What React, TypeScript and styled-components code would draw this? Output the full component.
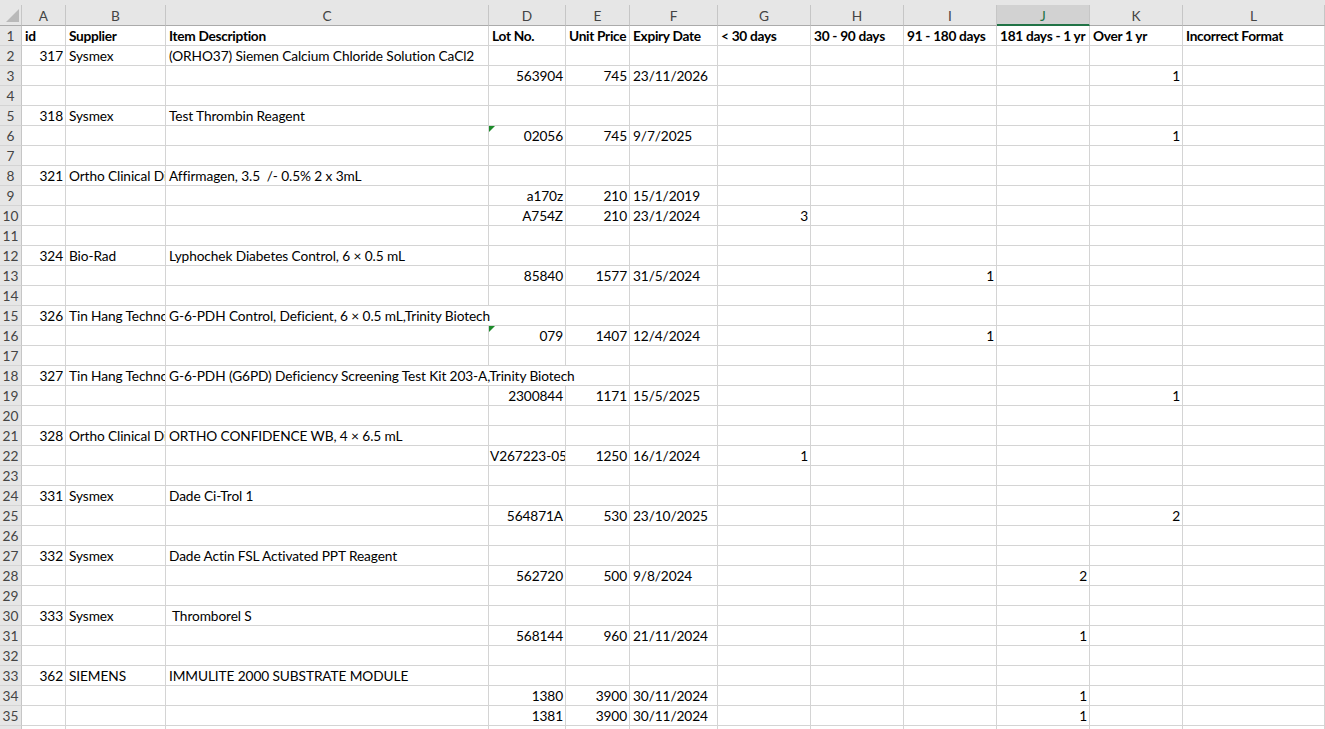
import styled, { createGlobalStyle } from "styled-components";

type Align = "l" | "r";

interface ICell {
  t: string;
  a?: Align;
  span?: number;
  flag?: boolean;
  bold?: boolean;
}

const COLS = ["A", "B", "C", "D", "E", "F", "G", "H", "I", "J", "K", "L"];
const SELECTED_COL = "J";

const header: Record<string, ICell> = {
  A: { t: "id", bold: true },
  B: { t: "Supplier", bold: true },
  C: { t: "Item Description", bold: true },
  D: { t: "Lot No.", bold: true },
  E: { t: "Unit Price", bold: true },
  F: { t: "Expiry Date", bold: true },
  G: { t: "< 30 days", bold: true },
  H: { t: "30 - 90 days", bold: true },
  I: { t: "91 - 180 days", bold: true },
  J: { t: "181 days - 1 yr", bold: true },
  K: { t: "Over 1 yr", bold: true },
  L: { t: "Incorrect Format", bold: true },
};

const item = (id: string, supplier: string, desc: string, span = 1) => ({
  A: { t: id, a: "r" as Align },
  B: { t: supplier },
  C: { t: desc, span },
});

const lot = (
  no: string,
  price: string,
  date: string,
  col?: string,
  count?: string,
  flag = false
) => {
  const row: Record<string, ICell> = {
    D: { t: no, a: "r", flag },
    E: { t: price, a: "r" },
    F: { t: date },
  };
  if (col && count) row[col] = { t: count, a: "r" };
  return row;
};

const rows: Record<number, Record<string, ICell>> = {
  1: header,
  2: item("317", "Sysmex", "(ORHO37) Siemen Calcium Chloride Solution CaCl2"),
  3: lot("563904", "745", "23/11/2026", "K", "1"),
  5: item("318", "Sysmex", "Test Thrombin Reagent"),
  6: lot("02056", "745", "9/7/2025", "K", "1", true),
  8: item("321", "Ortho Clinical Diagnostics", "Affirmagen, 3.5  /- 0.5% 2 x 3mL"),
  9: lot("a170z", "210", "15/1/2019"),
  10: lot("A754Z", "210", "23/1/2024", "G", "3"),
  12: item("324", "Bio-Rad", "Lyphochek Diabetes Control, 6 × 0.5 mL"),
  13: lot("85840", "1577", "31/5/2024", "I", "1"),
  15: item(
    "326",
    "Tin Hang Technology",
    "G-6-PDH Control, Deficient, 6 × 0.5 mL,Trinity Biotech",
    2
  ),
  16: lot("079", "1407", "12/4/2024", "I", "1", true),
  18: item(
    "327",
    "Tin Hang Technology",
    "G-6-PDH (G6PD) Deficiency Screening Test Kit 203-A,Trinity Biotech",
    3
  ),
  19: lot("2300844", "1171", "15/5/2025", "K", "1"),
  21: item("328", "Ortho Clinical Diagnostics", "ORTHO CONFIDENCE WB, 4 × 6.5 mL"),
  22: lot("V267223-05", "1250", "16/1/2024", "G", "1"),
  24: item("331", "Sysmex", "Dade Ci-Trol 1"),
  25: lot("564871A", "530", "23/10/2025", "K", "2"),
  27: item("332", "Sysmex", "Dade Actin FSL Activated PPT Reagent"),
  28: lot("562720", "500", "9/8/2024", "J", "2"),
  30: item("333", "Sysmex", " Thromborel S"),
  31: lot("568144", "960", "21/11/2024", "J", "1"),
  33: item("362", "SIEMENS", "IMMULITE 2000 SUBSTRATE MODULE"),
  34: lot("1380", "3900", "30/11/2024", "J", "1"),
  35: lot("1381", "3900", "30/11/2024", "J", "1"),
};

const ROW_COUNT = 36;

export default function App() {
  const body = [];
  for (let r = 1; r <= ROW_COUNT; r++) {
    const data = rows[r] || {};
    body.push(<RowHead key={`h${r}`}>{r}</RowHead>);
    for (let i = 0; i < COLS.length; i++) {
      const col = COLS[i];
      const cell = data[col];
      const span = cell?.span || 1;
      body.push(
        <Cell
          key={`${col}${r}`}
          $align={cell?.a || "l"}
          $bold={!!cell?.bold}
          $span={span}
        >
          {cell?.flag && <ErrorFlag />}
          {cell?.t}
        </Cell>
      );
      i += span - 1;
    }
  }

  return (
    <>
      <GlobalStyle />
      <Window>
        <TopStrip />
        <Sheet>
          <Corner>
            <svg width="13" height="13" viewBox="0 0 13 13">
              <polygon points="13,0 13,13 0,13" fill="#b9b9b9" />
            </svg>
          </Corner>
          {COLS.map((c) => (
            <ColHead key={c} $selected={c === SELECTED_COL}>
              {c}
            </ColHead>
          ))}
          {body}
        </Sheet>
      </Window>
    </>
  );
}

const GlobalStyle = createGlobalStyle`
  html, body {
    margin: 0;
    padding: 0;
    background: #ffffff;
    overflow: hidden;
  }
`;

const Window = styled.div`
  width: 1325px;
  height: 729px;
  overflow: hidden;
  background: #ffffff;
  font-family: Lato, "Open Sans", "Liberation Sans", sans-serif;
  font-size: 13.7px;
  color: #000000;
`;

const TopStrip = styled.div`
  height: 5px;
  background: #e6e6e6;
`;

const Sheet = styled.div`
  display: grid;
  grid-template-columns: 22px 44px 100px 323px 77px 64px 88px 93px 93px 93px 93px 93px 1fr;
  grid-template-rows: 21px;
  grid-auto-rows: 20px;
`;

const Corner = styled.div`
  background: #e6e6e6;
  border-right: 1px solid #c6c6c6;
  border-bottom: 1px solid #ababab;
  box-sizing: border-box;
  display: flex;
  align-items: flex-end;
  justify-content: flex-end;
  padding: 0 2px 3px 0;
`;

const ColHead = styled.div<{ $selected: boolean }>`
  box-sizing: border-box;
  background: ${(p) => (p.$selected ? "#d2d2d2" : "#e6e6e6")};
  color: ${(p) => (p.$selected ? "#217346" : "#444444")};
  border-right: 1px solid #c6c6c6;
  border-bottom: ${(p) => (p.$selected ? "2px solid #217346" : "1px solid #ababab")};
  display: flex;
  align-items: center;
  justify-content: center;
  padding-top: ${(p) => (p.$selected ? "1px" : "0")};
`;

const RowHead = styled.div`
  box-sizing: border-box;
  background: #e6e6e6;
  color: #444444;
  border-right: 1px solid #c6c6c6;
  border-bottom: 1px solid #d4d4d4;
  display: flex;
  align-items: center;
  justify-content: center;
`;

const Cell = styled.div<{ $align: Align; $bold: boolean; $span: number }>`
  position: relative;
  box-sizing: border-box;
  grid-column: span ${(p) => p.$span};
  border-right: 1px solid #d4d4d4;
  border-bottom: 1px solid #d4d4d4;
  padding: ${(p) => (p.$align === "r" ? "0 2px 0 1px" : "0 1px 0 3px")};
  line-height: 19px;
  white-space: pre;
  overflow: hidden;
  letter-spacing: ${(p) => (p.$bold ? "-0.3px" : "-0.1px")};
  text-align: ${(p) => (p.$align === "r" ? "right" : "left")};
  font-weight: ${(p) => (p.$bold ? 700 : 400)};
`;

const ErrorFlag = styled.span`
  position: absolute;
  top: 0;
  left: 0;
  width: 0;
  height: 0;
  border-top: 6px solid #1c8a2a;
  border-right: 6px solid transparent;
`;
